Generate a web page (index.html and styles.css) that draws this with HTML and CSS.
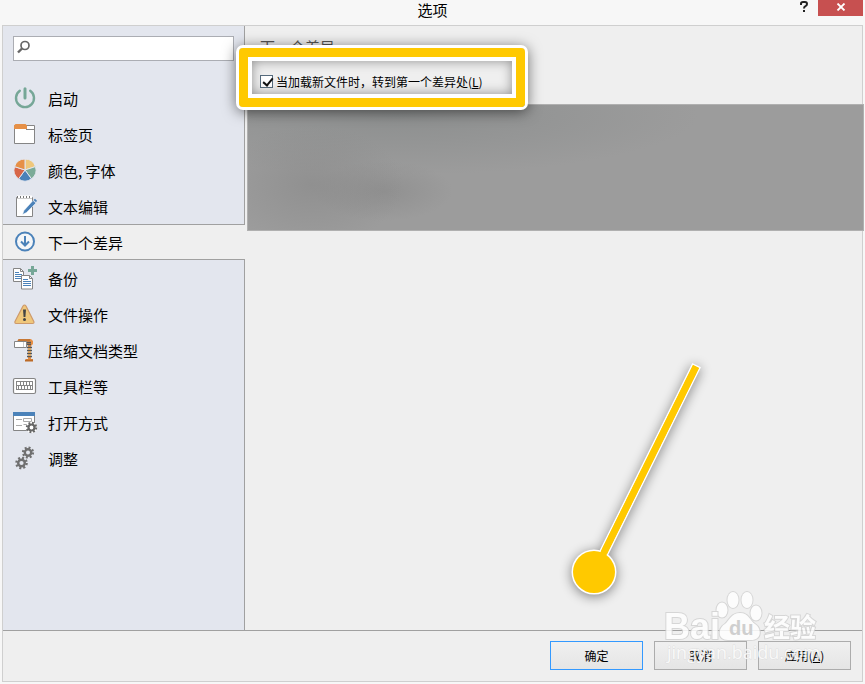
FILE: index.html
```html
<!DOCTYPE html>
<html lang="zh-CN">
<head>
<meta charset="utf-8">
<title>选项</title>
<link rel="stylesheet" href="styles.css">
</head>
<body>
<div class="window">
  <header class="titlebar">
    <h1 class="title">选项</h1>
    <div class="window-buttons">
      <button class="help" type="button" aria-label="帮助"><svg width="8" height="12" viewBox="0 0 8 12"><path d="M1 4V2.500Q1 1 3 1H5Q7 1 7 3Q7 4.500 5.500 5.200Q4 6 4 7.500" fill="none" stroke="#222" stroke-width="2"/><path d="M3 9h2v2H3z" fill="#222"/></svg></button>
      <button class="close" type="button" aria-label="关闭"><svg width="10" height="8" viewBox="0 0 10 8"><path d="M1.500 .5l7 7M8.500 .5l-7 7" stroke="#fff" stroke-width="1.800"/></svg></button>
    </div>
  </header>

  <div class="dialog">
    <div class="body">
      <aside class="sidebar">
        <div class="search">
          <svg class="search-icon" width="14" height="14" viewBox="0 0 14 14"><circle cx="8" cy="5.500" r="4" fill="none" stroke="#666" stroke-width="1.700"/><path d="M5 8.500L1 12.500" stroke="#666" stroke-width="2.400"/></svg>
          <input class="search-input" type="text" aria-label="搜索">
        </div>
        <nav class="nav">
          <a class="item" href="#"><svg class="icon" viewBox="0 0 24 24"><path d="M6.800 4.800A9 9 0 1 0 17.200 4.800" fill="none" stroke="#76a797" stroke-width="2.400" stroke-linecap="round"/><path d="M12 2.700V12" stroke="#76a797" stroke-width="3" stroke-linecap="round"/></svg>启动</a>
          <a class="item" href="#"><svg class="icon" viewBox="0 0 24 24"><path d="M1.500 3.500h20v18h-20z" fill="#fff" stroke="#858585"/><path d="M13 7.500h8.500" stroke="#858585"/><path d="M1 7V3.500L2.500 2h10L14 3.500V7z" fill="#e69047"/></svg>标签页</a>
          <a class="item" href="#"><svg class="icon" viewBox="0 0 24 24"><g stroke="#e3e6ee" stroke-width="1"><path d="M12 12V1A11 11 0 0 1 22.460 8.600z" fill="#efc77b"/><path d="M12 12L22.460 8.600A11 11 0 0 1 18.470 20.900z" fill="#7bab98"/><path d="M12 12L18.470 20.900A11 11 0 0 1 5.530 20.900z" fill="#4b82b9"/><path d="M12 12L5.530 20.900A11 11 0 0 1 1.540 8.600z" fill="#d76648"/><path d="M12 12L1.540 8.600A11 11 0 0 1 12 1z" fill="#e69047"/></g></svg>颜色, 字体</a>
          <a class="item" href="#"><svg class="icon" viewBox="0 0 24 24"><path d="M3.500 3.500h16v19h-16z" fill="#fff" stroke="#858585"/><path d="M4 3h15" stroke="#fff" stroke-width="3"/><path d="M4 3h15" stroke="#777" stroke-width="2" stroke-dasharray="1 2"/><path d="M3.500 4.500h16" stroke="#999" stroke-dasharray="1 1"/><path d="M9.500 20.500L11 16.500 20 6.500 23 9 13.500 18.500z" fill="#4b82b9" stroke="#fff" stroke-width=".5"/><path d="M20.500 6L22 4.800 24 6.800 23 8.300z" fill="#4b82b9"/></svg>文本编辑</a>
          <a class="item active" href="#" aria-current="page"><svg class="icon" viewBox="0 0 24 24"><circle cx="12" cy="11.500" r="9" fill="#f4f6f8" stroke="#4b82b9" stroke-width="2"/><path d="M12 6V15M8 11.500l4 4 4-4" fill="none" stroke="#4b82b9" stroke-width="2"/></svg>下一个差异</a>
          <a class="item" href="#"><svg class="icon" viewBox="0 0 24 24"><g fill="#fff" stroke="#858585"><path d="M.5 2.500h7l3 3v10h-10z"/><path d="M7.500 2.500v3h3" fill="none"/></g><path d="M2 6.500h4M2 8.500h7M2 10.500h7M2 12.500h7" stroke="#4b82b9"/><g fill="#fff" stroke="#858585"><path d="M8.500 9.500h8l3 3v10.500h-11z"/><path d="M16.500 9.500v3h3" fill="none"/></g><path d="M10 13.500h5M10 15.500h8M10 17.500h8M10 19.500h8" stroke="#4b82b9"/><path d="M18 0h3v3h3v3h-3v3h-3V6h-3V3h3z" fill="#76a797"/></svg>备份</a>
          <a class="item" href="#"><svg class="icon" viewBox="0 0 24 24"><path d="M10 4L2 19.500Q1.500 21.500 3 21.500H19.500Q21.500 21.500 20.800 19.500L13 4Q11.500 2 10 4z" fill="#efc77b" stroke="#ce9a6b" stroke-width="1.200"/><path d="M10 7.500h3l-.6 7.500h-1.800z" fill="#444"/><circle cx="11.500" cy="17.500" r="1.500" fill="#444"/></svg>文件操作</a>
          <a class="item" href="#"><svg class="icon" viewBox="0 0 24 24"><path d="M3 4L6 1h12l2 2v3l-2 2v13h2v2h-7v-2h2V7H4z" fill="#e69047"/><path d="M5 2h12" stroke="#a85e20"/><path d="M13 4.500h5M13 6.500h5M14 9.500h5M14 12.500h5M14 15.500h5M14 18.500h5" stroke="#555" stroke-width="1.500"/><path d="M15 11h3M15 14h3M15 17h3" stroke="#efc77b" stroke-width="1.200"/><path d="M12 22.500h8" stroke="#bc6b27" stroke-width="2"/><path d="M1.500 3.500h12v6h-12z" fill="#fff" stroke="#858585"/><path d="M10.500 4v5" stroke="#ccc"/></svg>压缩文档类型</a>
          <a class="item" href="#"><svg class="icon" viewBox="0 0 24 24"><rect x=".5" y="4.500" width="22" height="15" rx="1.500" fill="#fff" stroke="#858585" stroke-width="1.200"/><path d="M3 7.500h17M3 11.500h17M3 15.500h17" stroke="#858585"/><path d="M3.500 7v9M7.500 7v4M10.500 7v4M13.500 7v4M16.500 7v4M19.500 7v9M5.500 11v4M8.500 11v4M11.500 11v4M14.500 11v4M17.500 11v4" stroke="#858585"/></svg>工具栏等</a>
          <a class="item" href="#"><svg class="icon" viewBox="0 0 24 24"><path d="M.5 2.500h21v18H.5z" fill="#fff" stroke="#858585"/><path d="M0 2h22v4H0z" fill="#4b82b9"/><path d="M3 9.500h6M3 15.500h6M10.500 8.500h8v3h-8zM10.500 14.500h5" fill="none" stroke="#aaa"/><circle cx="18.500" cy="17.500" r="5.600" fill="#fff"/><circle cx="18.500" cy="17.500" r="3" fill="none" stroke="#666" stroke-width="2.200"/><circle cx="18.500" cy="17.500" r="4.700" fill="none" stroke="#666" stroke-width="2" stroke-dasharray="1.850 1.840"/></svg>打开方式</a>
          <a class="item" href="#"><svg class="icon" viewBox="0 0 24 24"><g fill="none" stroke="#707070" stroke-width="2.400"><circle cx="15" cy="6.500" r="3.200"/><circle cx="15" cy="6.500" r="4.900" stroke-dasharray="1.920 1.920"/><circle cx="8.500" cy="17" r="3.300"/><circle cx="8.500" cy="17" r="5.100" stroke-dasharray="2 2"/></g></svg>调整</a>
        </nav>
      </aside>

      <main class="content">
        <h2 class="heading">下一个差异</h2>
        <label class="option"><input class="check" type="checkbox" checked><span>当加载新文件时，转到第一个差异处(<u>L</u>)</span></label>
        <div class="redacted"></div>
        <div class="callout"></div>
        <svg class="pointer" width="180" height="270" viewBox="0 0 180 270" aria-hidden="true">
          <g fill="#ffc900" stroke="#fff" stroke-width="3" paint-order="stroke"><path d="M148 15L154 18 61 206 55 203z"/><circle cx="49" cy="222" r="21"/></g>
          <path d="M148 15L154 18 61 206 55 203z" fill="#ffc900"/>
        </svg>
      </main>
    </div>

    <footer class="footer">
      <button class="btn primary" type="button">确定</button>
      <button class="btn" type="button">取消</button>
      <button class="btn" type="button">应用(<u>A</u>)</button>
      <svg class="watermark" width="170" height="90" viewBox="0 0 170 90">
        <g fill="#fff" stroke="#d2d2d2" stroke-width="2" paint-order="stroke" opacity=".85">
          <ellipse cx="70" cy="30" rx="5.500" ry="7.500"/>
          <ellipse cx="81" cy="20" rx="5.500" ry="8"/>
          <ellipse cx="95" cy="20" rx="5.500" ry="8"/>
          <ellipse cx="104" cy="33" rx="5.500" ry="7.500"/>
          <path d="M88 33C79 33 77 41 73 44C66 48 65 60 76 60H99C110 60 110 49 103 44C98 41 97 33 88 33z"/>
          <text class="wm-logo" x="12" y="59">Bai</text>
          <text class="wm-cn" x="112" y="57">经验</text>
        </g>
        <text class="wm-du" x="77" y="55">du</text>
        <text class="wm-url" x="15" y="79">jingyan.baidu.com</text>
      </svg>
    </footer>
  </div>
</div>
</body>
</html>
```
FILE: styles.css
```css
* { box-sizing: border-box; }

body {
  margin: 0;
  background: #f7f7f7;
  color: #000;
  font-family: "Noto Sans CJK SC", "Noto Sans", sans-serif;
  font-size: 12px;
}

button { font: inherit; color: inherit; }

.window {
  display: flex;
  flex-direction: column;
  min-height: 100vh;
  padding: 0 2px 2px;
}

.titlebar {
  position: relative;
  height: 25px;
}

.title {
  margin: 0;
  font-size: 15px;
  font-weight: 400;
  line-height: 20px;
  text-align: center;
}

.window-buttons {
  position: absolute;
  top: 0;
  right: 0;
  display: flex;
  align-items: flex-start;
  gap: 10px;
}

.help,
.close {
  display: flex;
  justify-content: center;
  padding: 0;
  border: 0;
  background: none;
}

.help {
  width: 8px;
  padding-top: 1px;
}

.close {
  width: 45px;
  height: 16px;
  padding-top: 3px;
  background: #c75050;
}

.dialog {
  flex: 1;
  display: flex;
  flex-direction: column;
  border: 1px solid #cfcfcf;
  background: #efefef;
}

.body {
  flex: 1;
  display: flex;
  border-bottom: 1px solid #a0a0a0;
}

.sidebar {
  flex: 0 0 242px;
  border-right: 1px solid #a0a0a0;
  background: #e3e6ee;
}

.search {
  display: flex;
  height: 25px;
  margin: 10px 10px 19px;
  padding: 3px;
  border: 1px solid #abadb3;
  background: #fff;
}

.search-input {
  flex: 1;
  min-width: 0;
  border: 0;
  outline: 0;
  background: none;
}

.nav { margin-right: -1px; }

.item {
  display: flex;
  align-items: center;
  gap: 11px;
  height: 36px;
  padding-left: 10px;
  color: #000;
  font-size: 15px;
  text-decoration: none;
}

.active {
  border-top: 1px solid #a0a0a0;
  border-bottom: 1px solid #a0a0a0;
  background: #efefef;
}

.icon {
  width: 24px;
  height: 24px;
  overflow: visible;
}

.content {
  position: relative;
  flex: 1;
  min-width: 0;
  padding-top: 9px;
}

.heading {
  margin: 0 15px;
  color: #555;
  font-size: 15px;
  font-weight: 400;
  line-height: 24px;
}

.option {
  display: flex;
  align-items: center;
  gap: 3px;
  height: 24px;
  margin: 10px 15px 11px;
}

.check {
  appearance: none;
  width: 13px;
  height: 13px;
  margin: 0;
  border: 1px solid #566b7d;
  background: #fff;
}

.check:checked::before {
  content: "";
  display: block;
  width: 4px;
  height: 8px;
  margin: 0 4px;
  border: solid #111;
  border-width: 0 2px 2px 0;
  transform: rotate(40deg);
}

.redacted {
  height: 127px;
  margin-right: -2px;
  margin-left: 2px;
  border: 1px solid #b0b0b0;
  background:
    radial-gradient(ellipse 90px 60px at 65px 80px, #8889, transparent),
    radial-gradient(ellipse 70px 30px at 135px 86px, #8889, transparent),
    radial-gradient(ellipse 300px 60px at 150px 10px, #8d8f8f, transparent),
    #9c9c9c;
}

.callout {
  position: absolute;
  top: 22px;
  left: -6px;
  width: 286px;
  height: 59px;
  border: 9px solid #ffc900;
  border-radius: 4px;
  box-shadow: 0 0 0 3px #fff, 0 2px 14px 3px #0008, inset 0 0 0 4px #fff, inset 0 0 12px 4px #0006;
}

.pointer {
  position: absolute;
  top: 324px;
  left: 300px;
  filter: drop-shadow(0 2px 6px #0007);
}

.footer {
  position: relative;
  display: flex;
  justify-content: flex-end;
  gap: 11px;
  padding: 10px 11px 11px;
}

.btn {
  width: 93px;
  height: 29px;
  padding: 0;
  border: 1px solid #acacac;
  background: linear-gradient(#f0f0f0, #e5e5e5);
}

.primary { border-color: #3399ff; }

.watermark {
  position: absolute;
  right: 40px;
  bottom: 11px;
  pointer-events: none;
}

.wm-logo {
  font: bold 36px "Liberation Sans", sans-serif;
}

.wm-cn {
  font-size: 26px;
  font-weight: 700;
}

.wm-du {
  fill: #cfcfcf;
  font: bold 20px "Liberation Sans", sans-serif;
}

.wm-url {
  fill: #fff;
  fill-opacity: .8;
  stroke: #d2d2d2;
  stroke-opacity: .5;
  stroke-width: 1px;
  paint-order: stroke;
  font: 18px "Open Sans", sans-serif;
}
```
